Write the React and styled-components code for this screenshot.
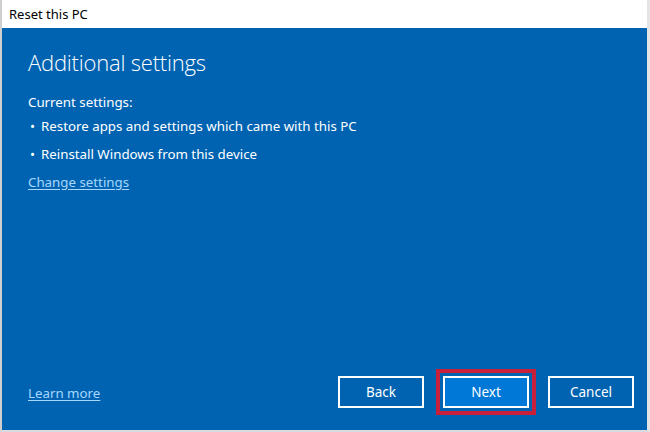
import React from "react";
import styled, { createGlobalStyle } from "styled-components";

const Global = createGlobalStyle`
  html, body { margin: 0; padding: 0; background: #f0f0f0; }
  #root { width: 650px; height: 432px; }
`;

const Frame = styled.div`
  width: 650px;
  height: 432px;
  box-sizing: border-box;
  display: flex;
  flex-direction: column;
  border-left: 2px solid #cfcfcf;
  border-right: 3px solid #e4e4e4;
  border-bottom: 2px solid #d6dce2;
  font-family: "Noto Sans", "Open Sans", sans-serif;
`;

const TitleBar = styled.div`
  height: 28px;
  flex: none;
  background: #ffffff;
  display: flex;
  align-items: center;
  padding-left: 7px;
  font-size: 13px;
  color: #000;
`;

const Content = styled.div`
  flex: 1;
  background: #0063b1;
  color: #fff;
  display: flex;
  flex-direction: column;
  padding: 0 13px 22px 26px;
`;

const Heading = styled.h1`
  margin: 23px 0 0;
  font-family: "Open Sans", sans-serif;
  font-weight: 300;
  font-size: 22px;
  line-height: 1;
  letter-spacing: -0.2px;
`;

const Label = styled.div`
  margin-top: 19px;
  font-size: 13.3px;
  line-height: 20px;
`;

const List = styled.ul`
  list-style: none;
  margin: 4px 0 0;
  padding: 0;
  display: flex;
  flex-direction: column;
  gap: 8px;
`;

const Item = styled.li`
  display: flex;
  font-size: 13.3px;
  line-height: 20px;
  &::before {
    content: "•";
    width: 11px;
    padding-left: 2px;
  }
`;

const Link = styled.a`
  color: #a6d8ff;
  text-decoration: underline;
  text-underline-offset: 2px;
  font-size: 13.3px;
  line-height: 20px;
  cursor: pointer;
  align-self: flex-start;
  margin-top: ${(p) => p.$mt || 0}px;
`;

const FooterLink = styled(Link)`
  align-self: flex-end;
  margin-bottom: 5px;
`;

const Spacer = styled.div`
  flex: 1;
`;

const Footer = styled.div`
  display: flex;
  align-items: flex-end;
`;

const Buttons = styled.div`
  margin-left: auto;
  display: flex;
  gap: 19px;
`;

const Button = styled.button`
  width: 86px;
  height: 32px;
  box-sizing: border-box;
  border: 2px solid #ffffff;
  background: ${(p) => (p.$primary ? "#0078d7" : "#0063b1")};
  color: #fff;
  font-family: "Noto Sans", sans-serif;
  font-size: 13.5px;
  padding: 0;
  outline: ${(p) => (p.$highlight ? "4px solid #c8203a" : "none")};
  outline-offset: 3px;
`;

export default function App() {
  return (
    <>
      <Global />
      <Frame>
        <TitleBar>Reset this PC</TitleBar>
        <Content>
          <Heading>Additional settings</Heading>
          <Label>Current settings:</Label>
          <List>
            <Item>Restore apps and settings which came with this PC</Item>
            <Item>Reinstall Windows from this device</Item>
          </List>
          <Link $mt={8}>Change settings</Link>
          <Spacer />
          <Footer>
            <FooterLink>Learn more</FooterLink>
            <Buttons>
              <Button>Back</Button>
              <Button $primary $highlight>Next</Button>
              <Button>Cancel</Button>
            </Buttons>
          </Footer>
        </Content>
      </Frame>
    </>
  );
}
